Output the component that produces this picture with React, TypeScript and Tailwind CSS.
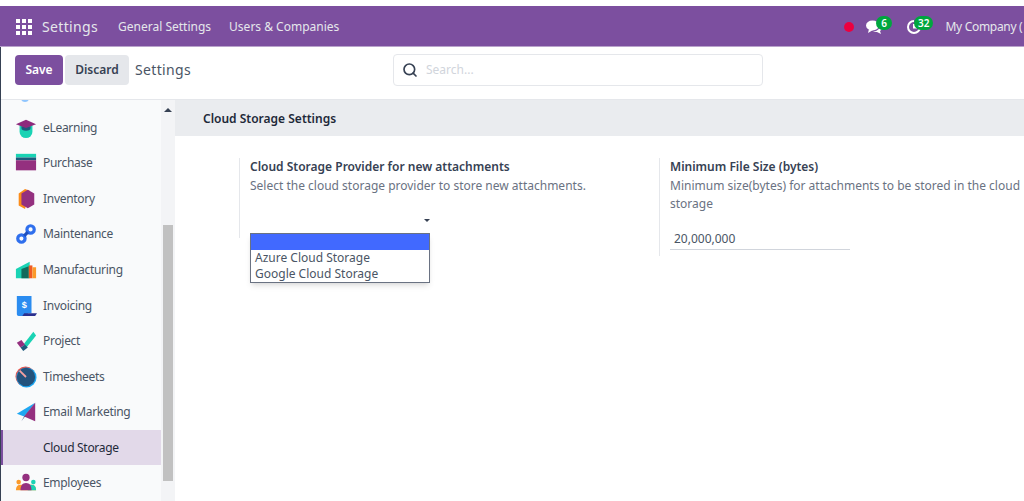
import type { ReactNode } from "react";
import { Search } from "lucide-react";

const iconClass = "h-5.5 w-5.5 shrink-0";

const apps: { name: string; icon: ReactNode; active?: boolean }[] = [
  {
    name: "eLearning",
    icon: (
      <svg viewBox="0 0 24 24" className={iconClass}>
        <path d="M5 9h14v7a7 7 0 0 1-14 0z" fill="#1ad3b4" />
        <path d="M7 10h10v2a5 3 0 0 1-10 0z" fill="#1d5a7c" />
        <path d="M12 3l11 5-11 4L1 8z" fill="#8e2a7c" />
      </svg>
    ),
  },
  {
    name: "Purchase",
    icon: (
      <svg viewBox="0 0 24 24" className={iconClass}>
        <rect x="1" y="2" width="22" height="4" fill="#1ad3b4" />
        <rect x="1" y="6" width="22" height="3" fill="#1d5a7c" />
        <rect x="1" y="9" width="22" height="11" fill="#94307f" />
      </svg>
    ),
  },
  {
    name: "Inventory",
    icon: (
      <svg viewBox="0 0 24 24" className={iconClass}>
        <path d="M11 1l5 2-5 20-7-4V6z" fill="#fb8c1a" />
        <path d="M14 2l7 4v12l-7 4-7-4V6z" fill="#94307f" />
      </svg>
    ),
  },
  {
    name: "Maintenance",
    icon: (
      <svg viewBox="0 0 24 24" className={iconClass} fill="none" stroke="#2f6fed" strokeWidth="3.5">
        <circle cx="17" cy="7" r="4" />
        <circle cx="7" cy="17" r="4" />
        <path d="M10 14l4-4" stroke="#1d4fc0" />
      </svg>
    ),
  },
  {
    name: "Manufacturing",
    icon: (
      <svg viewBox="0 0 24 24" className={iconClass}>
        <path d="M1 11l15-8v18H1z" fill="#1ad3b4" />
        <path d="M7 11l8-3v13H7z" fill="#136a5c" />
        <rect x="15" y="7" width="4" height="14" fill="#ef5a24" />
        <rect x="19" y="9" width="4" height="12" fill="#fb9a2a" />
      </svg>
    ),
  },
  {
    name: "Invoicing",
    icon: (
      <svg viewBox="0 0 24 24" className={iconClass}>
        <path d="M2 1h16v19h-4v3H4a2 2 0 0 1-2-2z" fill="#2b8cf0" />
        <path d="M10 20h14l-2 3H8z" fill="#2a2f8f" />
        <text x="10" y="14" fontSize="10" fontWeight="700" fill="#fff" textAnchor="middle" fontFamily="Liberation Sans, sans-serif">
          $
        </text>
      </svg>
    ),
  },
  {
    name: "Project",
    icon: (
      <svg viewBox="0 0 24 24" className={iconClass}>
        <path d="M9 16L20 2l3 4-12 15z" fill="#1ad3b4" />
        <path d="M2 14l5-3 4 5-5 3z" fill="#94307f" />
        <path d="M6 19l5-3 3 3-5 4z" fill="#1d5a7c" />
      </svg>
    ),
  },
  {
    name: "Timesheets",
    icon: (
      <svg viewBox="0 0 24 24" className={iconClass}>
        <circle cx="11.5" cy="11.5" r="11" fill="#e8524a" />
        <circle cx="12.5" cy="12.5" r="11" fill="#1ea7f2" />
        <circle cx="12" cy="12" r="10" fill="#23527c" />
        <path d="M5 5l7 7" stroke="#f4a0a0" strokeWidth="2" />
      </svg>
    ),
  },
  {
    name: "Email Marketing",
    icon: (
      <svg viewBox="0 0 24 24" className={iconClass}>
        <path d="M22 2L2 14l8 3z" fill="#1ea7f2" />
        <path d="M22 2L10 17l-3 5z" fill="#23427c" />
        <path d="M22 2v20l-12-5z" fill="#94307f" />
      </svg>
    ),
  },
  { name: "Cloud Storage", icon: <span className={iconClass} />, active: true },
  {
    name: "Employees",
    icon: (
      <svg viewBox="0 0 24 24" className={iconClass}>
        <circle cx="12" cy="6" r="4" fill="#94307f" />
        <circle cx="4" cy="11" r="2.5" fill="#fb9a2a" />
        <circle cx="20" cy="11" r="2.5" fill="#1ad3b4" />
        <path d="M1 20c0-4 2-6 5-6h12c3 0 5 2 5 6z" fill="#fb9a2a" />
        <path d="M14 20v-6h4c3 0 5 2 5 6z" fill="#1ad3b4" />
        <path d="M6 20c0-5 2-8 6-8s6 3 6 8z" fill="#94307f" />
      </svg>
    ),
  },
];

function NavCount({ value, className }: { value: number; className: string }) {
  return (
    <span className={`-mt-2 flex h-3.5 min-w-4 items-center justify-center rounded-full bg-green-600 px-1 text-[10px] font-semibold leading-none text-white ${className}`}>
      {value}
    </span>
  );
}

function Sidebar() {
  return (
    <aside className="relative flex w-[174px] shrink-0 overflow-hidden bg-gray-50">
      <span className="absolute left-5 -top-1.5 h-2 w-2 rounded-full bg-blue-300" />
      <div className="flex min-w-0 flex-1 flex-col pt-2.5">
        {apps.map((app) => (
          <div
            key={app.name}
            className={
              app.active
                ? "flex flex-1 items-center gap-1.5 border-l-2 border-[#7c4f9f] bg-[#e2d9e9] pl-3 text-xs tracking-tight text-gray-800"
                : "flex flex-1 items-center gap-1.5 pl-3.5 text-xs tracking-tight text-gray-600"
            }
          >
            {app.icon}
            <span>{app.name}</span>
          </div>
        ))}
      </div>
      <div className="flex w-3.5 shrink-0 flex-col items-center bg-gray-100 pb-5">
        <span className="mt-2 h-0 w-0 border-x-4 border-b-4 border-x-transparent border-b-gray-700" />
        <span className="mt-auto h-64 w-2.5 bg-[#c1c1c1]" />
      </div>
    </aside>
  );
}

function SettingBox({ title, help, className, children }: { title: string; help: string; className: string; children: ReactNode }) {
  return (
    <div className={`w-96 shrink-0 border-l border-gray-200 pl-2.5 pt-px ${className}`}>
      <h3 className="text-xs font-semibold text-gray-700">{title}</h3>
      <p className="mt-0.5 text-xs leading-[18px] text-gray-500">{help}</p>
      {children}
    </div>
  );
}

export default function App() {
  return (
    <div className="flex h-[501px] w-[1024px] flex-col overflow-hidden bg-white pt-1.5 font-['Noto_Sans',sans-serif]">
      <header className="shrink-0 border-b border-[#b9a3cb] bg-[#7c4f9f] text-white">
        <div className="flex h-10 items-center pl-4 pt-px">
          <svg viewBox="0 0 16 16" className="h-4 w-4 shrink-0 fill-white">
            <rect x="0" y="0" width="4" height="4" />
            <rect x="6" y="0" width="4" height="4" />
            <rect x="12" y="0" width="4" height="4" />
            <rect x="0" y="6" width="4" height="4" />
            <rect x="6" y="6" width="4" height="4" />
            <rect x="12" y="6" width="4" height="4" />
            <rect x="0" y="12" width="4" height="4" />
            <rect x="6" y="12" width="4" height="4" />
            <rect x="12" y="12" width="4" height="4" />
          </svg>
          <span className="ml-2.5 text-sm tracking-wide text-gray-200">Settings</span>
          <nav className="ml-5 flex flex-1 gap-4.5 text-xs text-gray-200">
            <span>General Settings</span>
            <span>Users &amp; Companies</span>
          </nav>
          <div className="flex w-45 shrink-0 items-center whitespace-nowrap">
            <span className="h-2.5 w-2.5 shrink-0 rounded-full bg-rose-600" />
            <svg viewBox="0 0 16 16" className="ml-3 h-4 w-4 shrink-0 fill-white">
              <ellipse cx="6.5" cy="6.5" rx="6.5" ry="5" />
              <path d="M3 10l-1 4 5-3z" />
              <path d="M14 6c2 2 2 5 0 6l1 3-4-2H7c3-1 7-2 7-7z" />
            </svg>
            <NavCount value={6} className="-ml-1.5" />
            <svg viewBox="0 0 16 16" className="ml-3.5 h-4 w-4 shrink-0" fill="none" stroke="white" strokeWidth="2">
              <path d="M14 8a6 6 0 1 1-6-6" />
              <path d="M8 5v3.5h3" />
            </svg>
            <NavCount value={32} className="-ml-2" />
            <span className="ml-3 text-xs tracking-tight text-gray-200">My Company (</span>
          </div>
        </div>
      </header>

      <div className="flex min-h-0 flex-1 flex-col border-l border-gray-700">
        <div className="flex h-13 shrink-0 items-center pb-1.5">
          <div className="flex w-96 shrink-0 items-center pl-3.5">
            <button className="h-7.5 w-12 rounded bg-[#7c4f9f] text-xs font-semibold text-white">Save</button>
            <button className="ml-0.5 h-7.5 w-16 rounded bg-gray-200 text-xs font-semibold text-gray-700">Discard</button>
            <span className="ml-1.5 text-sm tracking-wide text-gray-600">Settings</span>
          </div>
          <div className="ml-2 flex h-8 w-[370px] items-center gap-2 rounded border border-gray-200 pl-2">
            <Search className="h-4 w-4 text-gray-700" strokeWidth={2.5} />
            <span className="text-xs text-gray-300">Search...</span>
          </div>
        </div>

        <div className="flex min-h-0 flex-1 border-t border-gray-200">
          <Sidebar />
          <main className="min-w-0 flex-1 overflow-hidden">
            <div className="flex h-9 items-center bg-gray-200/80 pl-7 pt-px text-xs font-semibold text-gray-800">
              Cloud Storage Settings
            </div>
            <div className="flex items-start gap-9 pl-16 pt-5.5">
              <SettingBox
                className="h-20"
                title="Cloud Storage Provider for new attachments"
                help="Select the cloud storage provider to store new attachments."
              >
                <div className="relative mt-6 flex h-3.5 w-45 justify-end">
                  <span className="h-0 w-0 border-x-3 border-t-3 border-x-transparent border-t-gray-700" />
                  <div className="absolute left-0 top-full w-45 border border-gray-500 bg-white text-xs text-gray-600 shadow-md">
                    <div className="h-4 bg-[#4169ff]" />
                    <div className="pl-1">Azure Cloud Storage</div>
                    <div className="pl-1">Google Cloud Storage</div>
                  </div>
                </div>
              </SettingBox>
              <SettingBox
                className="pb-1.5"
                title="Minimum File Size (bytes)"
                help="Minimum size(bytes) for attachments to be stored in the cloud storage"
              >
                <div className="mt-4.5 w-45 border-b border-gray-300 pb-0.5 pl-1 text-xs text-gray-600">20,000,000</div>
              </SettingBox>
            </div>
          </main>
        </div>
      </div>
    </div>
  );
}
